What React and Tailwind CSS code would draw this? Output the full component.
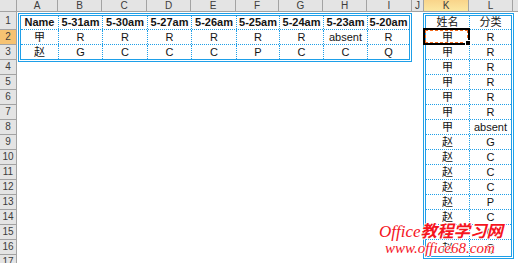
const COLS = [
  ['A', 'w-[41px]'],
  ['B', 'w-[44px]'],
  ['C', 'w-[45px]'],
  ['D', 'w-[44px]'],
  ['E', 'w-[45px]'],
  ['F', 'w-[43px]'],
  ['G', 'w-[44px]'],
  ['H', 'w-[44px]'],
  ['I', 'w-[45px]'],
  ['J', 'w-[12px]'],
  ['K', 'w-[45px]'],
  ['L', 'w-[44px]'],
]

const ROW_H = ['h-[18px]', ...Array(16).fill('h-[15px]')]

const W1 = ['w-[38px]', 'w-[44px]', 'w-[45px]', 'w-[44px]', 'w-[45px]', 'w-[43px]', 'w-[44px]', 'w-[44px]', 'w-[41px]']
const HEAD = ['Name', '5-31am', '5-30am', '5-27am', '5-26am', '5-25am', '5-24am', '5-23am', '5-20am']
const DATA = [
  ['甲', 'R', 'R', 'R', 'R', 'R', 'R', 'absent', 'R'],
  ['赵', 'G', 'C', 'C', 'C', 'P', 'C', 'C', 'Q'],
]

const LIST = [
  ['甲', 'R'], ['甲', 'R'], ['甲', 'R'], ['甲', 'R'], ['甲', 'R'], ['甲', 'R'], ['甲', 'absent'],
  ['赵', 'G'], ['赵', 'C'], ['赵', 'C'], ['赵', 'C'], ['赵', 'P'], ['赵', 'C'], ['赵', 'C'], ['赵', 'Q'],
]

const dot = 'border-dotted border-[#1e9fe8]'

function Table1() {
  const rows = [
    { cells: HEAD, h: 'h-[14px] border-b', bold: true },
    { cells: DATA[0], h: 'h-[15px] border-b' },
    { cells: DATA[1], h: 'h-[14px]' },
  ]
  return (
    <div className="ml-px mt-px w-[394px] border-[3px] border-double border-[#1e9fe8] bg-white">
      {rows.map((r, i) => (
        <div key={i} className={`flex ${r.h} ${dot}`}>
          {r.cells.map((c, j) => (
            <div
              key={j}
              className={`${W1[j]} flex items-center justify-center ${j < 8 ? 'border-r' : ''} ${dot} ${r.bold ? 'font-bold' : ''}`}
            >
              {c}
            </div>
          ))}
        </div>
      ))}
    </div>
  )
}

function Table2() {
  return (
    <div className="ml-[11px] mt-px w-[91px] border-[3px] border-double border-[#1e9fe8] bg-white">
      <div className={`flex h-[14px] border-b ${dot}`}>
        <div className={`w-[44px] flex items-center justify-center border-r ${dot}`}>姓名</div>
        <div className="w-[41px] flex items-center justify-center">分类</div>
      </div>
      {LIST.map((r, i) => (
        <div key={i} className={`flex ${i < 14 ? 'h-[15px] border-b' : 'h-[16px]'} ${dot}`}>
          <div className={`w-[44px] flex items-center justify-center border-r ${dot}`}>{r[0]}</div>
          <div className="w-[41px] flex items-center justify-center">{r[1]}</div>
        </div>
      ))}
    </div>
  )
}

export default function App() {
  return (
    <div className="relative w-[518px] h-[263px] overflow-hidden bg-white text-[11px] text-[#141414] font-['Liberation_Sans','Noto_Sans_CJK_SC',sans-serif]">
      {/* column headers */}
      <div className="flex h-[12px] border-b border-[#a3a3a3] bg-[#e4e4e4] text-[#3c3c3c] text-[10px] leading-none">
        <div className="w-[17px] shrink-0 border-r border-[#a3a3a3]" />
        {COLS.map(([id, w]) => (
          <div
            key={id}
            className={`${w} shrink-0 flex items-center justify-center border-r border-[#a3a3a3] ${
              id === 'K' ? 'bg-gradient-to-b from-[#f9d48a] to-[#fce8a2]' : ''
            }`}
          >
            {id}
          </div>
        ))}
        <div className="flex-1" />
      </div>

      <div className="flex">
        {/* row headers */}
        <div className="w-[17px] shrink-0 bg-[#e4e4e4] border-r border-[#a3a3a3] text-[10px] text-[#3c3c3c] leading-none">
          {ROW_H.map((h, i) => (
            <div
              key={i}
              className={`${h} flex items-center justify-center border-b border-[#a3a3a3] ${
                i === 1 ? 'bg-[#f6c272]' : ''
              }`}
            >
              {i + 1}
            </div>
          ))}
        </div>

        {/* sheet */}
        <div className="relative flex-1 flex items-start">
          <Table1 />
          <Table2 />
          {/* active cell K2 */}
          <div className="absolute left-[406px] top-[16px] w-[47px] h-[17px] border-2 border-black">
            <div className="h-full w-full border border-dashed border-[#f26b1d]" />
            <div className="absolute -right-[3px] -bottom-[3px] w-[4px] h-[4px] bg-black border border-white box-content" />
          </div>
        </div>
      </div>

      {/* watermark */}
      <div className="absolute left-[379px] top-[222px] text-[#f5141e] leading-none [text-shadow:1px_0_0_#fff,-1px_0_0_#fff,0_1px_0_#fff,0_-1px_0_#fff]">
        <div className="flex items-baseline">
          <span className="italic text-[17px] font-['Liberation_Serif',serif]">Office</span>
          <span className="italic font-bold text-[16.5px] font-['Noto_Sans_CJK_SC',sans-serif]">教程学习网</span>
        </div>
        <div className="ml-[6px] mt-[1px] italic text-[15px] font-['Liberation_Serif',serif]">www.office68.com</div>
      </div>
    </div>
  )
}
